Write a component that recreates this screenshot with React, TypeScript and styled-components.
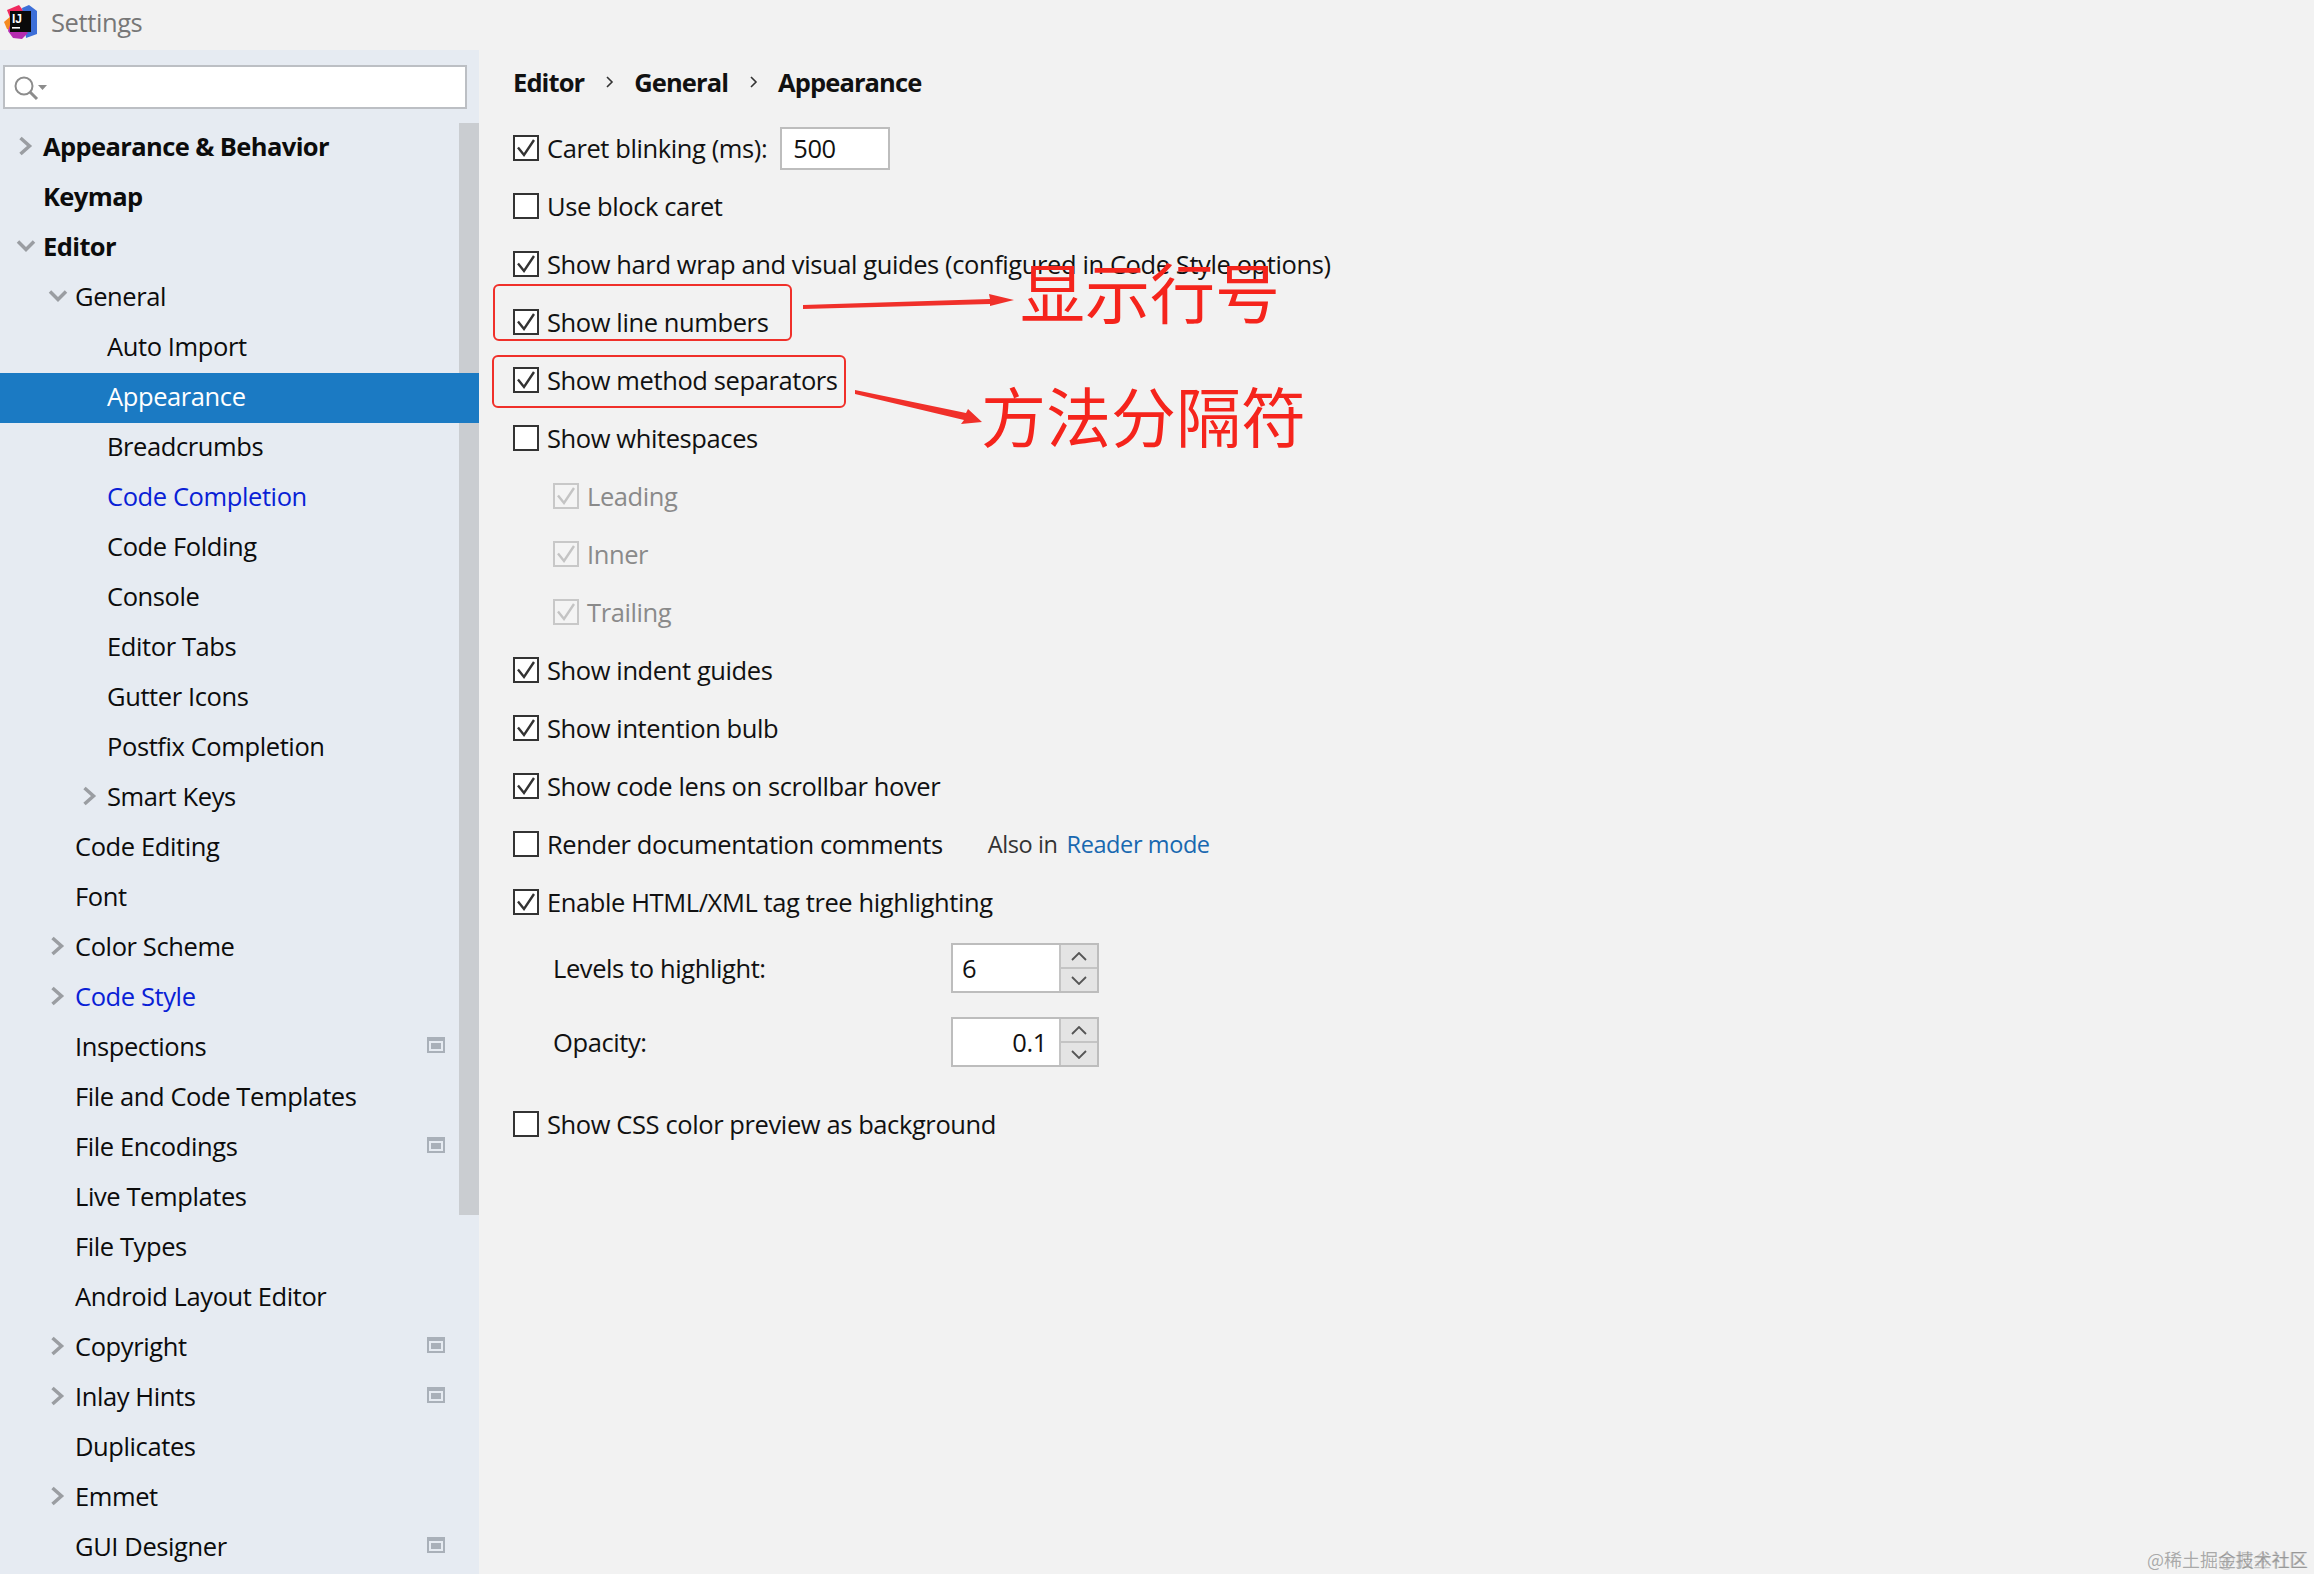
import React from "react";
import styled, { createGlobalStyle } from "styled-components";

const FONT = `"Open Sans", "Noto Sans", "Liberation Sans", sans-serif`;
const CJK = `"Noto Sans CJK SC", "Noto Sans", sans-serif`;

type TreeItem = {
  label: string;
  level: number;
  arrow?: "right" | "down";
  bold?: boolean;
  link?: boolean;
  selected?: boolean;
  pin?: boolean;
};

const tree: TreeItem[] = [
  { label: "Appearance & Behavior", level: 0, arrow: "right", bold: true },
  { label: "Keymap", level: 0, bold: true },
  { label: "Editor", level: 0, arrow: "down", bold: true },
  { label: "General", level: 1, arrow: "down" },
  { label: "Auto Import", level: 2 },
  { label: "Appearance", level: 2, selected: true },
  { label: "Breadcrumbs", level: 2 },
  { label: "Code Completion", level: 2, link: true },
  { label: "Code Folding", level: 2 },
  { label: "Console", level: 2 },
  { label: "Editor Tabs", level: 2 },
  { label: "Gutter Icons", level: 2 },
  { label: "Postfix Completion", level: 2 },
  { label: "Smart Keys", level: 2, arrow: "right" },
  { label: "Code Editing", level: 1 },
  { label: "Font", level: 1 },
  { label: "Color Scheme", level: 1, arrow: "right" },
  { label: "Code Style", level: 1, arrow: "right", link: true },
  { label: "Inspections", level: 1, pin: true },
  { label: "File and Code Templates", level: 1 },
  { label: "File Encodings", level: 1, pin: true },
  { label: "Live Templates", level: 1 },
  { label: "File Types", level: 1 },
  { label: "Android Layout Editor", level: 1 },
  { label: "Copyright", level: 1, arrow: "right", pin: true },
  { label: "Inlay Hints", level: 1, arrow: "right", pin: true },
  { label: "Duplicates", level: 1 },
  { label: "Emmet", level: 1, arrow: "right" },
  { label: "GUI Designer", level: 1, pin: true },
];

const GlobalStyle = createGlobalStyle`
  html, body {
    margin: 0;
    padding: 0;
    background: #f2f2f2;
  }
  body {
    font-family: ${FONT};
    overflow: hidden;
  }
`;

const Window = styled.div`
  position: relative;
  width: 2314px;
  height: 1574px;
  overflow: hidden;
  background: #f2f2f2;
  color: #111;
  font-size: 25.5px;
  letter-spacing: -0.4px;
`;

const TitleBar = styled.header`
  height: 44px;
  padding: 0 0 6px 4px;
  display: flex;
  align-items: center;
  gap: 13px;
  color: #777;
`;

const Body = styled.div`
  display: flex;
  height: 1524px;
`;

const Sidebar = styled.aside`
  position: relative;
  width: 479px;
  flex: none;
  background: #e6ebf2;
  padding-top: 15px;
  overflow: hidden;
`;

const SearchBox = styled.div`
  width: 464px;
  height: 44px;
  box-sizing: border-box;
  margin-left: 3px;
  margin-bottom: 14px;
  background: #fff;
  border: 2px solid #bcbfc4;
  display: flex;
  align-items: center;
  padding-left: 9px;
`;

const Row = styled.div<{ $level: number; $selected?: boolean; $bold?: boolean; $link?: boolean }>`
  position: relative;
  z-index: ${(p) => (p.$selected ? 1 : 0)};
  height: 46px;
  padding: 0 0 4px ${(p) => 43 + p.$level * 32}px;
  display: flex;
  align-items: center;
  background: ${(p) => (p.$selected ? "#1b7ac3" : "transparent")};
  color: ${(p) => (p.$selected ? "#fff" : p.$link ? "#0a1fd6" : "#0c0c0c")};
  font-weight: ${(p) => (p.$bold ? 700 : 400)};
  letter-spacing: ${(p) => (p.$bold ? "-0.6px" : "-0.4px")};
`;

const ArrowSlot = styled.span<{ $level: number }>`
  position: absolute;
  left: ${(p) => 15 + p.$level * 32}px;
  top: 13px;
  width: 22px;
  height: 20px;
  display: flex;
`;

const PinSlot = styled.span`
  position: absolute;
  left: 427px;
  top: 14px;
  display: flex;
`;

const Scrollbar = styled.div`
  position: absolute;
  left: 459px;
  top: 73px;
  width: 20px;
  height: 1092px;
  background: #cacdd1;
`;

const Main = styled.main`
  flex: 1;
  padding: 7px 0 0 34px;
`;

const Breadcrumb = styled.nav`
  height: 50px;
  display: flex;
  align-items: center;
  margin-bottom: 12px;
  font-weight: 700;
  letter-spacing: -0.9px;
  color: #111;
`;

const Sep = styled.span`
  display: flex;
  width: 50px;
  justify-content: center;
`;

const OptionRow = styled.div<{ $indent?: boolean; $muted?: boolean; $top?: number }>`
  height: 58px;
  margin-top: ${(p) => p.$top ?? 0}px;
  display: flex;
  align-items: center;
  gap: 8px;
  padding-left: ${(p) => (p.$indent ? 40 : 0)}px;
  color: ${(p) => (p.$muted ? "#8a8a8a" : "#111")};
`;

const Box = styled.span<{ $muted?: boolean }>`
  width: 26px;
  height: 26px;
  flex: none;
  box-sizing: border-box;
  border: 2px solid ${(p) => (p.$muted ? "#c8c8c8" : "#333")};
  background: ${(p) => (p.$muted ? "#f4f4f4" : "#fff")};
  display: flex;
  align-items: center;
  justify-content: center;
`;

const NumberInput = styled.span`
  width: 110px;
  height: 43px;
  box-sizing: border-box;
  margin-left: 5px;
  background: #fff;
  border: 2px solid #bdbdbd;
  display: flex;
  align-items: center;
  padding-left: 11px;
`;

const AlsoIn = styled.span`
  margin-left: 37px;
  font-size: 23.5px;
  color: #333;
`;

const ReaderLink = styled.span`
  margin-left: 9px;
  color: #1868b0;
`;

const SpinnerRow = styled.div<{ $top: number }>`
  display: flex;
  align-items: center;
  height: 50px;
  margin-top: ${(p) => p.$top}px;
  padding-left: 40px;
`;

const SpinnerLabel = styled.span`
  width: 398px;
`;

const Spinner = styled.div`
  width: 148px;
  height: 50px;
  box-sizing: border-box;
  border: 2px solid #bdbdbd;
  display: flex;
`;

const SpinnerValue = styled.div<{ $right?: boolean }>`
  flex: 1;
  background: #fff;
  display: flex;
  align-items: center;
  justify-content: ${(p) => (p.$right ? "flex-end" : "flex-start")};
  padding: 0 12px 0 9px;
`;

const SpinnerButtons = styled.div`
  width: 36px;
  display: flex;
  flex-direction: column;
  border-left: 2px solid #c4c4c4;
`;

const SpinnerButton = styled.div<{ $down?: boolean }>`
  flex: 1;
  background: #e4e4e4;
  display: flex;
  align-items: center;
  justify-content: center;
  border-top: ${(p) => (p.$down ? "2px solid #c4c4c4" : "none")};
`;

const Callout = styled.div<{ $x: number; $y: number; $w: number; $h: number }>`
  position: absolute;
  left: ${(p) => p.$x}px;
  top: ${(p) => p.$y}px;
  width: ${(p) => p.$w}px;
  height: ${(p) => p.$h}px;
  box-sizing: border-box;
  border: 2.5px solid #f0302a;
  border-radius: 6px;
`;

const Note = styled.div<{ $x: number; $y: number; $size: number }>`
  position: absolute;
  left: ${(p) => p.$x}px;
  top: ${(p) => p.$y}px;
  font-family: ${CJK};
  font-weight: 400;
  font-size: ${(p) => p.$size}px;
  line-height: 1;
  letter-spacing: 0;
  color: #f5241c;
  white-space: nowrap;
`;

const Arrows = styled.svg`
  position: absolute;
  left: 0;
  top: 0;
  pointer-events: none;
`;

const Watermark = styled.div<{ $x: number; $alpha: number }>`
  position: absolute;
  left: ${(p) => p.$x}px;
  top: 1546px;
  font-family: ${CJK};
  font-size: 18px;
  letter-spacing: 0;
  white-space: nowrap;
  color: rgba(120, 120, 120, ${(p) => p.$alpha});
`;

const LogoText = styled.text`
  font-family: "Liberation Sans", sans-serif;
  font-weight: 700;
  font-size: 12px;
  letter-spacing: 0;
`;

function Logo() {
  return (
    <svg width="34" height="34" viewBox="0 0 34 34">
      <polygon points="3,5 15,0 21,8 8,18" fill="#f0295f" />
      <polygon points="0,17 7,11 9,27 3,24" fill="#f58a1f" />
      <polygon points="18,3 25,0 33,6 33,29 22,33 20,14" fill="#3d6fd8" />
      <polygon points="4,26 8,14 24,28 18,34 9,33" fill="#b52bb0" />
      <rect x="6" y="6" width="21" height="21" fill="#0a0a0a" />
      <LogoText x="8" y="17.5" fill="#fff">IJ</LogoText>
      <rect x="8" y="22" width="8" height="1.6" fill="#fff" />
    </svg>
  );
}

function SearchIcon() {
  return (
    <svg width="36" height="28" viewBox="0 0 36 28">
      <circle cx="10" cy="13" r="8.5" fill="none" stroke="#8c8c8c" strokeWidth="2" />
      <path d="M16 19 L23 26" stroke="#8c8c8c" strokeWidth="3" />
      <path d="M24 12 H33 L28.5 17 Z" fill="#8c8c8c" />
    </svg>
  );
}

function TreeArrow({ dir }: { dir: "right" | "down" }) {
  return (
    <svg width="22" height="20" viewBox="0 0 22 20">
      <path
        d={dir === "right" ? "M5.5 2 L14.5 10 L5.5 18" : "M3 5.5 L11 13.5 L19 5.5"}
        fill="none"
        stroke="#9a9da2"
        strokeWidth="3.5"
      />
    </svg>
  );
}

function PinIcon() {
  return (
    <svg width="18" height="16" viewBox="0 0 18 16">
      <rect width="18" height="16" fill="#a9b0b9" />
      <rect x="2" y="4" width="14" height="10" fill="#e6ebf2" />
      <rect x="4" y="6" width="10" height="6" fill="#a9b0b9" />
    </svg>
  );
}

function Check({ muted }: { muted?: boolean }) {
  return (
    <svg width="22" height="22" viewBox="0 0 22 22">
      <path
        d="M3 10.5 L9 18 L19 3"
        fill="none"
        stroke={muted ? "#c4c4c4" : "#333"}
        strokeWidth="2.4"
      />
    </svg>
  );
}

function CheckBox({ checked, muted }: { checked?: boolean; muted?: boolean }) {
  return <Box $muted={muted}>{checked && <Check muted={muted} />}</Box>;
}

function Chevron() {
  return (
    <svg width="9" height="14" viewBox="0 0 9 14">
      <path d="M2 2 L7 7 L2 12" fill="none" stroke="#333" strokeWidth="1.6" />
    </svg>
  );
}

function SpinArrow({ down }: { down?: boolean }) {
  return (
    <svg width="16" height="9" viewBox="0 0 16 9">
      <path
        d={down ? "M1 1 L8 8 L15 1" : "M1 8 L8 1 L15 8"}
        fill="none"
        stroke="#555"
        strokeWidth="1.8"
      />
    </svg>
  );
}

function NumberSpinner({ value, right }: { value: string; right?: boolean }) {
  return (
    <Spinner>
      <SpinnerValue $right={right}>{value}</SpinnerValue>
      <SpinnerButtons>
        <SpinnerButton>
          <SpinArrow />
        </SpinnerButton>
        <SpinnerButton $down>
          <SpinArrow down />
        </SpinnerButton>
      </SpinnerButtons>
    </Spinner>
  );
}

function Option({ label, checked, top }: { label: string; checked?: boolean; top?: number }) {
  return (
    <OptionRow $top={top}>
      <CheckBox checked={checked} />
      {label}
    </OptionRow>
  );
}

function SubOption({ label }: { label: string }) {
  return (
    <OptionRow $indent $muted>
      <CheckBox checked muted />
      {label}
    </OptionRow>
  );
}

export default function App() {
  return (
    <Window>
      <GlobalStyle />
      <TitleBar>
        <Logo />
        Settings
      </TitleBar>
      <Body>
        <Sidebar>
          <SearchBox>
            <SearchIcon />
          </SearchBox>
          {tree.map((item) => (
            <Row
              key={item.label}
              $level={item.level}
              $selected={item.selected}
              $bold={item.bold}
              $link={item.link}
            >
              {item.arrow && (
                <ArrowSlot $level={item.level}>
                  <TreeArrow dir={item.arrow} />
                </ArrowSlot>
              )}
              {item.label}
              {item.pin && (
                <PinSlot>
                  <PinIcon />
                </PinSlot>
              )}
            </Row>
          ))}
          <Scrollbar />
        </Sidebar>
        <Main>
          <Breadcrumb>
            Editor
            <Sep>
              <Chevron />
            </Sep>
            General
            <Sep>
              <Chevron />
            </Sep>
            Appearance
          </Breadcrumb>
          <OptionRow>
            <CheckBox checked />
            Caret blinking (ms):
            <NumberInput>500</NumberInput>
          </OptionRow>
          <Option label="Use block caret" />
          <Option label="Show hard wrap and visual guides (configured in Code Style options)" checked />
          <Option label="Show line numbers" checked />
          <Option label="Show method separators" checked />
          <Option label="Show whitespaces" />
          <SubOption label="Leading" />
          <SubOption label="Inner" />
          <SubOption label="Trailing" />
          <Option label="Show indent guides" checked />
          <Option label="Show intention bulb" checked />
          <Option label="Show code lens on scrollbar hover" checked />
          <OptionRow>
            <CheckBox />
            Render documentation comments
            <AlsoIn>
              Also in<ReaderLink>Reader mode</ReaderLink>
            </AlsoIn>
          </OptionRow>
          <Option label="Enable HTML/XML tag tree highlighting" checked />
          <SpinnerRow $top={12}>
            <SpinnerLabel>Levels to highlight:</SpinnerLabel>
            <NumberSpinner value="6" />
          </SpinnerRow>
          <SpinnerRow $top={24}>
            <SpinnerLabel>Opacity:</SpinnerLabel>
            <NumberSpinner value="0.1" right />
          </SpinnerRow>
          <Option label="Show CSS color preview as background" top={28} />
        </Main>
      </Body>
      <Callout $x={493} $y={284} $w={299} $h={57} />
      <Callout $x={492} $y={355} $w={354} $h={53} />
      <Arrows width="2314" height="1574" viewBox="0 0 2314 1574">
        <polygon points="803,305 990,299 989,294 1014,300 990,306 990,304 803,309" fill="#f0302a" />
        <polygon points="855,390 966,413 968,409 982,422 961,424 964,420 855,394" fill="#f0302a" />
      </Arrows>
      <Note $x={1020} $y={258} $size={65}>显示行号</Note>
      <Note $x={981} $y={382} $size={65}>方法分隔符</Note>
      <Watermark $x={2147} $alpha={0.6}>@稀土掘金技术社区</Watermark>
      <Watermark $x={2218} $alpha={0.35}>@掘金社区</Watermark>
    </Window>
  );
}
